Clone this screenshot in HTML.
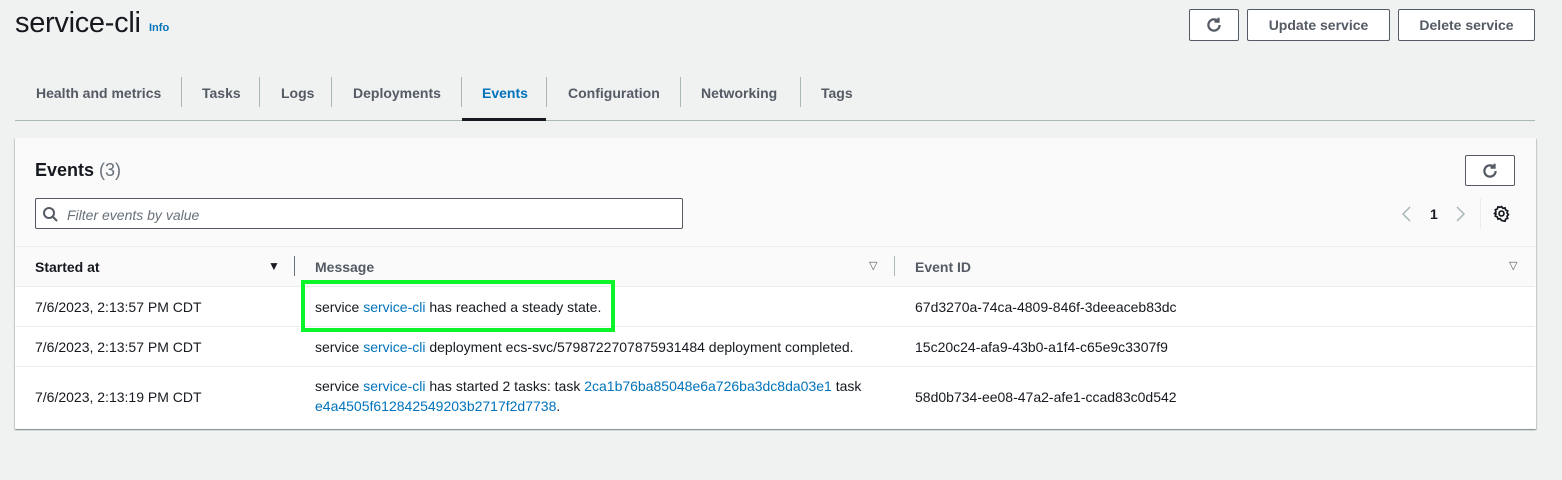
<!DOCTYPE html>
<html><head><style>
*{margin:0;padding:0;box-sizing:border-box}
body{width:1562px;height:480px;background:#f0f1f1;font-family:"Liberation Sans",sans-serif;color:#16191f;position:relative;overflow:hidden;font-size:14px}
.a{position:absolute;white-space:nowrap}
.btn{position:absolute;border:1px solid #545b64;border-radius:2px;background:#fff;font-weight:bold;color:#545b64;font-size:14px;display:flex;align-items:center;justify-content:center}
.tab{position:absolute;top:85px;font-weight:bold;font-size:14px;color:#545b64}
.sep{position:absolute;top:77px;width:1px;height:30px;background:#aab7b8}
.l{color:#0073bb}
.hl{position:absolute;left:15px;width:1520px;height:1px;background:#eaeded}
</style></head><body>
<div class="a" style="left:15px;top:7px;font-size:29px;color:#16191f;letter-spacing:-0.3px">service-cli</div>
<div class="a l" style="left:149px;top:22px;font-size:11px;font-weight:bold">Info</div>
<div class="btn" style="left:1189px;top:9px;width:50px;height:32px"><svg width="18" height="18" viewBox="0 0 16 16" fill="none" stroke="#545b64" stroke-width="2"><path d="M13 8a5 5 0 1 1-1.5-3.6"/><path d="M12 1.5v3.5h-3.5"/></svg></div>
<div class="btn" style="left:1247px;top:9px;width:143px;height:32px">Update service</div>
<div class="btn" style="left:1398px;top:9px;width:137px;height:32px">Delete service</div>

<div class="tab" style="left:36px">Health and metrics</div><div class="sep" style="left:181px"></div>
<div class="tab" style="left:202px">Tasks</div><div class="sep" style="left:259px"></div>
<div class="tab" style="left:281px">Logs</div><div class="sep" style="left:331px"></div>
<div class="tab" style="left:353px">Deployments</div><div class="sep" style="left:461px"></div>
<div class="tab" style="left:482px;color:#0073bb">Events</div><div class="sep" style="left:546px"></div>
<div class="tab" style="left:568px">Configuration</div><div class="sep" style="left:680px"></div>
<div class="tab" style="left:701px">Networking</div><div class="sep" style="left:800px"></div>
<div class="tab" style="left:821px">Tags</div>
<div class="a" style="left:15px;top:120px;width:1520px;height:1px;background:#aab7b8"></div>
<div class="a" style="left:462px;top:118px;width:84px;height:3px;background:#16191f"></div>

<div class="a" style="left:15px;top:138px;width:1521px;height:291px;background:#fafafa;box-shadow:0 1px 1px rgba(0,28,36,.3),1px 1px 1px rgba(0,28,36,.15),-1px 1px 1px rgba(0,28,36,.15)"></div>
<div class="a" style="left:15px;top:286px;width:1521px;height:142px;background:#fff"></div>
<div class="a" style="left:35px;top:160px;font-size:18px;font-weight:bold">Events <span style="font-weight:normal;color:#687078">(3)</span></div>
<div class="btn" style="left:1465px;top:155px;width:50px;height:31px"><svg width="18" height="18" viewBox="0 0 16 16" fill="none" stroke="#545b64" stroke-width="2"><path d="M13 8a5 5 0 1 1-1.5-3.6"/><path d="M12 1.5v3.5h-3.5"/></svg></div>
<div class="a" style="left:35px;top:198px;width:648px;height:31px;border:1px solid #545b64;border-radius:2px;background:#fff"></div>
<svg class="a" style="left:42px;top:206px" width="16" height="16" viewBox="0 0 16 16" fill="none" stroke="#545b64" stroke-width="2"><circle cx="7" cy="7" r="5"/><path d="M11 11l4 4"/></svg>
<div class="a" style="left:67px;top:207px;font-style:italic;color:#687078;font-size:14px">Filter events by value</div>
<svg class="a" style="left:1400px;top:206px" width="12" height="16" viewBox="0 0 12 16" fill="none" stroke="#aab7b8" stroke-width="1.5"><path d="M10 1L3 8l7 7"/></svg>
<div class="a" style="left:1430px;top:206px;font-weight:bold;font-size:14px">1</div>
<svg class="a" style="left:1455px;top:206px" width="12" height="16" viewBox="0 0 12 16" fill="none" stroke="#aab7b8" stroke-width="1.5"><path d="M2 1l7 7-7 7"/></svg>
<div class="a" style="left:1480px;top:198px;width:1px;height:31px;background:#eaeded"></div>
<svg class="a" style="left:1493px;top:205px" width="17" height="17" viewBox="0 0 16 16" fill="none" stroke="#16191f" stroke-width="1.6"><circle cx="8" cy="8" r="2.3"/><path d="M8 1.5l1.3 1.6 2-.4.6 2 1.9.8-.6 2 1.3 1.5-1.3 1.5.6 2-1.9.8-.6 2-2-.4L8 14.5l-1.3-1.6-2 .4-.6-2-1.9-.8.6-2L1.5 8l1.3-1.5-.6-2 1.9-.8.6-2 2 .4z"/></svg>

<div class="hl" style="top:246px"></div>
<div class="hl" style="top:286px"></div>
<div class="hl" style="top:326px"></div>
<div class="hl" style="top:366px"></div>
<div class="a" style="left:35px;top:259px;font-weight:bold">Started at</div>
<div class="a" style="left:268px;top:259px;font-size:12px">▼</div>
<div class="a" style="left:294px;top:256px;width:1px;height:20px;background:#687078"></div>
<div class="a" style="left:315px;top:259px;font-weight:bold;color:#545b64">Message</div>
<div class="a" style="left:869px;top:259px;font-size:11px;color:#545b64">▽</div>
<div class="a" style="left:894px;top:256px;width:1px;height:20px;background:#aab7b8"></div>
<div class="a" style="left:915px;top:259px;font-weight:bold;color:#545b64">Event ID</div>
<div class="a" style="left:1509px;top:259px;font-size:11px;color:#545b64">▽</div>

<div class="a" style="left:35px;top:299px">7/6/2023, 2:13:57 PM CDT</div>
<div class="a" style="left:315px;top:299px">service <span class="l">service-cli</span> has reached a steady state.</div>
<div class="a" style="left:915px;top:299px">67d3270a-74ca-4809-846f-3deeaceb83dc</div>
<div class="a" style="left:35px;top:339px">7/6/2023, 2:13:57 PM CDT</div>
<div class="a" style="left:315px;top:339px">service <span class="l">service-cli</span> deployment ecs-svc/5798722707875931484 deployment completed.</div>
<div class="a" style="left:915px;top:339px">15c20c24-afa9-43b0-a1f4-c65e9c3307f9</div>
<div class="a" style="left:35px;top:389px">7/6/2023, 2:13:19 PM CDT</div>
<div class="a" style="left:315px;top:378px">service <span class="l">service-cli</span> has started 2 tasks: task <span class="l">2ca1b76ba85048e6a726ba3dc8da03e1</span> task</div>
<div class="a" style="left:315px;top:398px"><span class="l">e4a4505f612842549203b2717f2d7738</span>.</div>
<div class="a" style="left:915px;top:389px">58d0b734-ee08-47a2-afe1-ccad83c0d542</div>

<div class="a" style="left:301px;top:280px;width:314px;height:52px;border:4px solid #0bf52a"></div>
</body></html>
